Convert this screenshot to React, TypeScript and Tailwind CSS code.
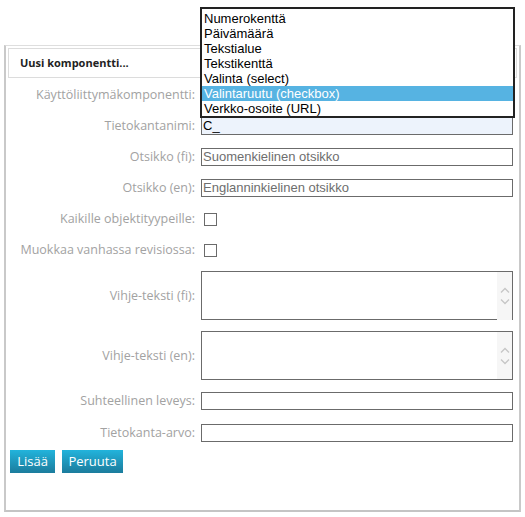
import React from "react";

const labelFont = { fontFamily: '"Open Sans", "Noto Sans", sans-serif' };

const options = [
  "Numerokenttä",
  "Päivämäärä",
  "Tekstialue",
  "Tekstikenttä",
  "Valinta (select)",
  "Valintaruutu (checkbox)",
  "Verkko-osoite (URL)",
];

type RowProps = {
  label: string;
  className?: string;
  children: React.ReactNode;
};

const Row = ({ label, className, children }: RowProps) => (
  <div className={`flex items-center ${className ?? ""}`}>
    <div className="w-[192px] shrink-0 pr-[6px] text-right text-[12.5px] leading-[16px] text-[#a2a2a2]">
      {label}
    </div>
    <div className="w-[312px]">{children}</div>
  </div>
);

const TextInput = ({ value, filled }: { value?: string; filled?: boolean }) => (
  <div
    className={`h-[18px] w-[312px] border border-[#6b6b6b] px-[1px] text-[13px] leading-[16px] font-['Liberation_Sans',Arial,sans-serif] ${
      filled ? "bg-[#edf3fc] text-black" : "bg-white text-[#6e6e6e]"
    }`}
  >
    {value}
  </div>
);

const Checkbox = () => (
  <div className="ml-[3px] h-[13px] w-[13px] border border-[#6b6b6b] bg-white" />
);

const TextArea = ({ overhang }: { overhang?: boolean }) => (
  <div className="relative h-[49px] w-[312px] border border-[#6b6b6b] bg-white">
    {/* scrollbar */}
    <div
      className={`absolute right-0 top-0 flex w-[15px] flex-col items-center justify-center gap-[6px] bg-[#f6f6f6] ${
        overhang ? "bottom-[-1px]" : "bottom-0"
      }`}
    >
      <svg width="10" height="6" viewBox="0 0 10 6" fill="none" stroke="#c6c6c6" strokeWidth="1.3">
        <path d="M1 5.5 5 1.5 9 5.5" />
      </svg>
      <svg width="10" height="6" viewBox="0 0 10 6" fill="none" stroke="#c6c6c6" strokeWidth="1.3">
        <path d="M1 0.5 5 4.5 9 0.5" />
      </svg>
    </div>
  </div>
);

export default function App() {
  return (
    <div className="relative h-[517px] w-[525px] overflow-hidden bg-white" style={labelFont}>
      <div className="pl-[4px] pt-[45px]">
        {/* Panel */}
        <div className="h-[467px] w-[517px] border-x-2 border-b-2 border-t border-x-[#c9c9c9] border-b-[#c4c4c4] border-t-[#dedede] bg-white px-[2px] pt-[2px]">
          {/* Header */}
          <div className="flex h-[30px] items-center border border-[#dcdcdc] pl-[11px] text-[11px] font-bold text-[#222]">
            Uusi komponentti...
          </div>

          <div className="flex flex-col pl-[1px]">
            <Row label="Käyttöliittymäkomponentti:" className="mt-[8px]">
              <TextInput />
            </Row>
            <Row label="Tietokantanimi:" className="mt-[13px]">
              <TextInput value="C_" filled />
            </Row>
            <Row label="Otsikko (fi):" className="mt-[13px]">
              <TextInput value="Suomenkielinen otsikko" />
            </Row>
            <Row label="Otsikko (en):" className="mt-[13px]">
              <TextInput value="Englanninkielinen otsikko" />
            </Row>
            <Row label="Kaikille objektityypeille:" className="mt-[13px] h-[18px]">
              <Checkbox />
            </Row>
            <Row label="Muokkaa vanhassa revisiossa:" className="mt-[13px] h-[18px]">
              <Checkbox />
            </Row>
            <Row label="Vihje-teksti (fi):" className="mt-[12px]">
              <TextArea overhang />
            </Row>
            <Row label="Vihje-teksti (en):" className="mt-[11px]">
              <TextArea />
            </Row>
            <Row label="Suhteellinen leveys:" className="mt-[12px]">
              <TextInput />
            </Row>
            <Row label="Tietokanta-arvo:" className="mt-[14px]">
              <TextInput />
            </Row>
          </div>

          {/* Buttons */}
          <div className="mt-[8px] flex gap-[7px] pl-[2px]">
            <button className="h-[23px] w-[45px] bg-gradient-to-b from-[#22b4dc] to-[#1b7c9d] text-[13px] leading-[23px] text-white">
              Lisää
            </button>
            <button className="h-[23px] w-[61px] bg-gradient-to-b from-[#22b4dc] to-[#1b7c9d] text-[13px] leading-[23px] text-white">
              Peruuta
            </button>
          </div>
        </div>
      </div>

      {/* Open dropdown list */}
      <div className="absolute left-[200px] top-[7px] w-[315px] border-2 border-[#222] bg-white pt-[2px] font-['Liberation_Sans',Arial,sans-serif] text-[13px] text-black">
        {options.map((opt) => (
          <div
            key={opt}
            className={`h-[15px] pl-[2px] leading-[15px] ${
              opt === "Valintaruutu (checkbox)" ? "bg-[#56b3e2] text-white" : ""
            }`}
          >
            {opt}
          </div>
        ))}
      </div>
    </div>
  );
}
